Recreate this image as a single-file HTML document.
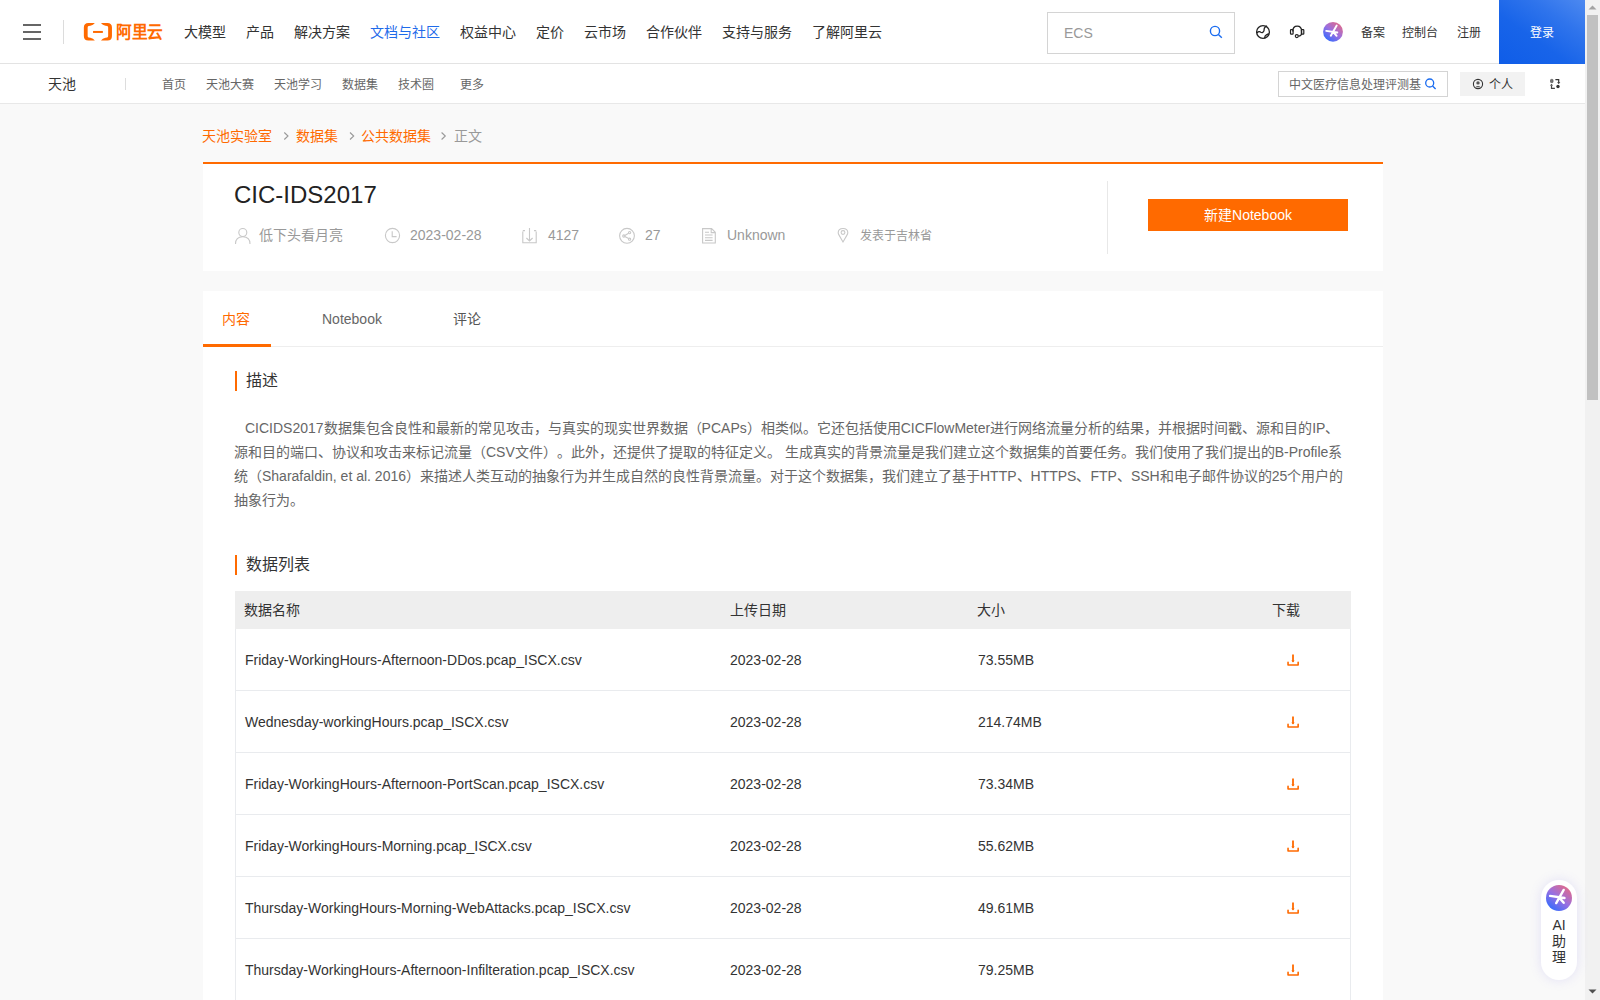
<!DOCTYPE html>
<html lang="zh-CN"><head><meta charset="utf-8">
<style>
*{margin:0;padding:0;box-sizing:border-box}
html,body{text-spacing-trim:space-all;width:1600px;height:1000px;overflow:hidden;background:#f9f9f9;font-family:"Liberation Sans",sans-serif;color:#333}
.a{position:absolute}
.t{position:absolute;white-space:nowrap;line-height:20px}
.f12{font-size:12px}.f14{font-size:14px}.f16{font-size:16px}
#hdr{left:0;top:0;width:1585px;height:64px;background:#fff;border-bottom:1px solid #e3e3e3}
#sub{left:0;top:64px;width:1585px;height:40px;background:#fff;border-bottom:1px solid #e8e8e8}
.bar{position:absolute;left:23px;width:18px;height:2px;background:#666}
</style></head><body>
<!-- header -->
<div id="hdr" class="a"></div>
<div class="bar" style="top:24px"></div>
<div class="bar" style="top:31px"></div>
<div class="bar" style="top:38px"></div>
<div class="a" style="left:63px;top:20px;width:1px;height:24px;background:#dcdcdc"></div>
<svg class="a" style="left:83px;top:22px" width="82" height="20" viewBox="0 0 82 20">
<g transform="translate(0.85,0.95)" fill="#ff6a00">
<path d="M11 0 L4.5 0 Q0 0 0 4.5 L0 13.1 Q0 17.6 4.5 17.6 L11 17.6 Q9.5 15.6 6.5 14.9 L4.8 14.5 Q3.8 14.2 3.8 13 L3.8 4.6 Q3.8 3.4 4.8 3.1 L6.5 2.7 Q9.5 2 11 0Z"/>
<path transform="translate(28.1,0) scale(-1,1)" d="M11 0 L4.5 0 Q0 0 0 4.5 L0 13.1 Q0 17.6 4.5 17.6 L11 17.6 Q9.5 15.6 6.5 14.9 L4.8 14.5 Q3.8 14.2 3.8 13 L3.8 4.6 Q3.8 3.4 4.8 3.1 L6.5 2.7 Q9.5 2 11 0Z"/>
<rect x="9.2" y="8" width="9.8" height="2"/>
</g>
</svg>
<div class="t" style="left:115.5px;top:20.5px;font-size:16px;line-height:20px;color:#ff6a00;font-weight:bold;letter-spacing:0px;transform:scale(0.98,1.1);transform-origin:0 0">阿里云</div>
<div class="t f14" style="left:184px;top:22px">大模型</div>
<div class="t f14" style="left:246px;top:22px">产品</div>
<div class="t f14" style="left:294px;top:22px">解决方案</div>
<div class="t f14" style="left:370px;top:22px;color:#1f6bea">文档与社区</div>
<div class="t f14" style="left:460px;top:22px">权益中心</div>
<div class="t f14" style="left:536px;top:22px">定价</div>
<div class="t f14" style="left:584px;top:22px">云市场</div>
<div class="t f14" style="left:646px;top:22px">合作伙伴</div>
<div class="t f14" style="left:722px;top:22px">支持与服务</div>
<div class="t f14" style="left:811.5px;top:22px">了解阿里云</div>
<div class="a" style="left:1047px;top:12px;width:188px;height:42px;border:1px solid #d4d4d4;background:#fff"></div>
<div class="t f14" style="left:1064px;top:23px;color:#999">ECS</div>
<svg class="a" style="left:1209px;top:25px" width="15" height="15" viewBox="0 0 15 15"><circle cx="6" cy="6" r="4.6" fill="none" stroke="#1a6cf0" stroke-width="1.4"/><path d="M9.4 9.4 L12.8 12.8" stroke="#1a6cf0" stroke-width="1.4"/></svg>
<div class="t f12" style="left:1361px;top:23px">备案</div>
<div class="t f12" style="left:1402px;top:23px">控制台</div>
<div class="t f12" style="left:1457px;top:23px">注册</div>
<div class="a" style="left:1499px;top:0;width:86px;height:64px;background:linear-gradient(35deg,#0f5de8 0%,#1864e9 40%,#2f74ec 70%,#4d89f0 100%)"></div>
<div class="t f12" style="left:1530px;top:23px;color:#fff">登录</div>
<!-- subnav -->
<div id="sub" class="a"></div>
<div class="t f14" style="left:48px;top:74px">天池</div>
<div class="a" style="left:125px;top:78px;width:1px;height:12px;background:#ddd"></div>
<div class="t f12" style="left:162px;top:75px;color:#666">首页</div>
<div class="t f12" style="left:206px;top:75px;color:#666">天池大赛</div>
<div class="t f12" style="left:274px;top:75px;color:#666">天池学习</div>
<div class="t f12" style="left:342px;top:75px;color:#666">数据集</div>
<div class="t f12" style="left:398px;top:75px;color:#666">技术圈</div>
<div class="t f12" style="left:460px;top:75px;color:#666">更多</div>
<div class="a" style="left:1278px;top:71px;width:170px;height:26px;border:1px solid #d4d4d4;background:#fff"></div>
<div class="t f12" style="left:1289px;top:75px;color:#666">中文医疗信息处理评测基</div>
<div class="a" style="left:1460px;top:72px;width:65px;height:24px;background:#f2f2f2"></div>
<div class="t f12" style="left:1489px;top:75px">个人</div>
<!-- breadcrumb -->
<div class="t f14" style="left:202px;top:126px;color:#ff6a00">天池实验室</div>
<div class="t f14" style="left:295.5px;top:126px;color:#ff6a00">数据集</div>
<div class="t f14" style="left:360.5px;top:126px;color:#ff6a00">公共数据集</div>
<div class="t f14" style="left:454px;top:126px;color:#999">正文</div>
<!-- card1 -->
<div class="a" style="left:203px;top:162px;width:1180px;height:109px;background:#fff;border-top:2px solid #ff6a00"></div>
<div class="t" style="left:234px;top:180px;font-size:24px;line-height:30px;color:#222">CIC-IDS2017</div>
<div class="t f14" style="left:259px;top:225px;color:#999">低下头看月亮</div>
<div class="t f14" style="left:410px;top:225px;color:#999">2023-02-28</div>
<div class="t f14" style="left:548px;top:225px;color:#999">4127</div>
<div class="t f14" style="left:645px;top:225px;color:#999">27</div>
<div class="t f14" style="left:727px;top:225px;color:#999">Unknown</div>
<div class="t f12" style="left:860px;top:226px;color:#999">发表于吉林省</div>
<div class="a" style="left:1107px;top:181px;width:1px;height:73px;background:#e8e8e8"></div>
<div class="a" style="left:1148px;top:199px;width:200px;height:32px;background:#ff6a00"></div>
<div class="t f14" style="left:1148px;top:205px;width:200px;text-align:center;color:#fff">新建Notebook</div>
<!-- card2 -->
<div class="a" style="left:203px;top:291px;width:1180px;height:709px;background:#fff"></div>
<div class="a" style="left:203px;top:346px;width:1180px;height:1px;background:#eee"></div>
<div class="a" style="left:203px;top:344px;width:68px;height:3px;background:#ff6a00"></div>
<div class="t f14" style="left:222px;top:309px;color:#ff6a00">内容</div>
<div class="t f14" style="left:322px;top:309px;color:#666">Notebook</div>
<div class="t f14" style="left:453px;top:309px;color:#555">评论</div>
<div class="a" style="left:235px;top:371px;width:2px;height:20px;background:#ff6a00"></div>
<div class="t f16" style="left:246px;top:371px">描述</div>
<div class="a" style="left:235px;top:555px;width:2px;height:20px;background:#ff6a00"></div>
<div class="t f16" style="left:246px;top:555px">数据列表</div>
<!-- paragraph -->
<div class="t f14" style="left:245px;top:418px;color:#666">CICIDS2017数据集包含良性和最新的常见攻击，与真实的现实世界数据（PCAPs）相类似。它还包括使用CICFlowMeter进行网络流量分析的结果，并根据时间戳、源和目的IP、</div>
<div class="t f14" style="left:234px;top:442px;color:#666">源和目的端口、协议和攻击来标记流量（CSV文件）。此外，还提供了提取的特征定义。 生成真实的背景流量是我们建立这个数据集的首要任务。我们使用了我们提出的B-Profile系</div>
<div class="t f14" style="left:234px;top:466px;color:#666">统（Sharafaldin, et al. 2016）来描述人类互动的抽象行为并生成自然的良性背景流量。对于这个数据集，我们建立了基于HTTP、HTTPS、FTP、SSH和电子邮件协议的25个用户的</div>
<div class="t f14" style="left:234px;top:490px;color:#666">抽象行为。</div>
<!-- table -->
<div class="a" style="left:235px;top:591px;width:1116px;height:38px;background:#eee"></div>
<div class="t f14" style="left:244px;top:600px">数据名称</div>
<div class="t f14" style="left:730px;top:600px">上传日期</div>
<div class="t f14" style="left:977px;top:600px">大小</div>
<div class="t f14" style="left:1272px;top:600px">下载</div>
<div class="a" style="left:235px;top:629px;width:1px;height:371px;background:#e9ebee"></div>
<div class="a" style="left:1350px;top:629px;width:1px;height:371px;background:#e9ebee"></div>

<div class="t f14" style="left:245px;top:650px">Friday-WorkingHours-Afternoon-DDos.pcap_ISCX.csv</div>
<div class="t f14" style="left:730px;top:650px">2023-02-28</div>
<div class="t f14" style="left:978px;top:650px">73.55MB</div>
<svg class="a" style="left:1286px;top:652px" width="15" height="15" viewBox="0 0 15 15"><path d="M7 2.5 V9.5" stroke="#ff6a00" stroke-width="1.8" fill="none"/><path d="M5.3 8.6 L7 10.6 L8.7 8.6Z" fill="#ff6a00"/><path d="M2.05 10.2 V13 H12.15 V10.2" stroke="#ff6a00" stroke-width="1.6" fill="none" stroke-linejoin="round" stroke-linecap="round"/></svg>
<div class="a" style="left:235px;top:690px;width:1116px;height:1px;background:#e9ebee"></div>
<div class="t f14" style="left:245px;top:712px">Wednesday-workingHours.pcap_ISCX.csv</div>
<div class="t f14" style="left:730px;top:712px">2023-02-28</div>
<div class="t f14" style="left:978px;top:712px">214.74MB</div>
<svg class="a" style="left:1286px;top:714px" width="15" height="15" viewBox="0 0 15 15"><path d="M7 2.5 V9.5" stroke="#ff6a00" stroke-width="1.8" fill="none"/><path d="M5.3 8.6 L7 10.6 L8.7 8.6Z" fill="#ff6a00"/><path d="M2.05 10.2 V13 H12.15 V10.2" stroke="#ff6a00" stroke-width="1.6" fill="none" stroke-linejoin="round" stroke-linecap="round"/></svg>
<div class="a" style="left:235px;top:752px;width:1116px;height:1px;background:#e9ebee"></div>
<div class="t f14" style="left:245px;top:774px">Friday-WorkingHours-Afternoon-PortScan.pcap_ISCX.csv</div>
<div class="t f14" style="left:730px;top:774px">2023-02-28</div>
<div class="t f14" style="left:978px;top:774px">73.34MB</div>
<svg class="a" style="left:1286px;top:776px" width="15" height="15" viewBox="0 0 15 15"><path d="M7 2.5 V9.5" stroke="#ff6a00" stroke-width="1.8" fill="none"/><path d="M5.3 8.6 L7 10.6 L8.7 8.6Z" fill="#ff6a00"/><path d="M2.05 10.2 V13 H12.15 V10.2" stroke="#ff6a00" stroke-width="1.6" fill="none" stroke-linejoin="round" stroke-linecap="round"/></svg>
<div class="a" style="left:235px;top:814px;width:1116px;height:1px;background:#e9ebee"></div>
<div class="t f14" style="left:245px;top:836px">Friday-WorkingHours-Morning.pcap_ISCX.csv</div>
<div class="t f14" style="left:730px;top:836px">2023-02-28</div>
<div class="t f14" style="left:978px;top:836px">55.62MB</div>
<svg class="a" style="left:1286px;top:838px" width="15" height="15" viewBox="0 0 15 15"><path d="M7 2.5 V9.5" stroke="#ff6a00" stroke-width="1.8" fill="none"/><path d="M5.3 8.6 L7 10.6 L8.7 8.6Z" fill="#ff6a00"/><path d="M2.05 10.2 V13 H12.15 V10.2" stroke="#ff6a00" stroke-width="1.6" fill="none" stroke-linejoin="round" stroke-linecap="round"/></svg>
<div class="a" style="left:235px;top:876px;width:1116px;height:1px;background:#e9ebee"></div>
<div class="t f14" style="left:245px;top:898px">Thursday-WorkingHours-Morning-WebAttacks.pcap_ISCX.csv</div>
<div class="t f14" style="left:730px;top:898px">2023-02-28</div>
<div class="t f14" style="left:978px;top:898px">49.61MB</div>
<svg class="a" style="left:1286px;top:900px" width="15" height="15" viewBox="0 0 15 15"><path d="M7 2.5 V9.5" stroke="#ff6a00" stroke-width="1.8" fill="none"/><path d="M5.3 8.6 L7 10.6 L8.7 8.6Z" fill="#ff6a00"/><path d="M2.05 10.2 V13 H12.15 V10.2" stroke="#ff6a00" stroke-width="1.6" fill="none" stroke-linejoin="round" stroke-linecap="round"/></svg>
<div class="a" style="left:235px;top:938px;width:1116px;height:1px;background:#e9ebee"></div>
<div class="t f14" style="left:245px;top:960px">Thursday-WorkingHours-Afternoon-Infilteration.pcap_ISCX.csv</div>
<div class="t f14" style="left:730px;top:960px">2023-02-28</div>
<div class="t f14" style="left:978px;top:960px">79.25MB</div>
<svg class="a" style="left:1286px;top:962px" width="15" height="15" viewBox="0 0 15 15"><path d="M7 2.5 V9.5" stroke="#ff6a00" stroke-width="1.8" fill="none"/><path d="M5.3 8.6 L7 10.6 L8.7 8.6Z" fill="#ff6a00"/><path d="M2.05 10.2 V13 H12.15 V10.2" stroke="#ff6a00" stroke-width="1.6" fill="none" stroke-linejoin="round" stroke-linecap="round"/></svg>
<div class="a" style="left:235px;top:1000px;width:1116px;height:1px;background:#e9ebee"></div>
<!-- header icons -->
<svg class="a" style="left:1250px;top:18px" width="100" height="28" viewBox="1250 18 100 28">
<circle cx="1263" cy="32" r="6.4" fill="none" stroke="#222" stroke-width="1.3"/>
<path d="M1256.8 33.2 C1258 31.6 1259.6 31.2 1260.8 32.2 C1262 33 1263.6 32.4 1264 30.6 C1264.3 29.2 1263.8 28.2 1265 27.2 C1265.6 26.6 1266.4 26.2 1267 25.8" fill="none" stroke="#222" stroke-width="1.3"/>
<path d="M1264.6 38.4 C1264.6 36.6 1265.2 35.4 1266.4 34.8 C1267.2 34.4 1268 34 1268.8 33.6" fill="none" stroke="#222" stroke-width="1.3"/>
<path d="M1292.8 31.5 Q1292.8 26.2 1297.2 26.2 Q1301.6 26.2 1301.6 31.5 L1301.6 33.5 Q1301.4 36 1298.5 36.2" fill="none" stroke="#222" stroke-width="1.3"/>
<rect x="1290.5" y="29.6" width="2.6" height="4.6" rx="0.6" fill="none" stroke="#222" stroke-width="1.2"/>
<rect x="1301.4" y="29.6" width="2.4" height="4.6" rx="0.6" fill="none" stroke="#222" stroke-width="1.2"/>
<circle cx="1296.8" cy="36.1" r="1.5" fill="none" stroke="#222" stroke-width="1.2"/>
<defs><linearGradient id="aig" x1="0.15" y1="0.95" x2="0.85" y2="0.05"><stop offset="0" stop-color="#2f6bff"/><stop offset="0.5" stop-color="#9a6fe0"/><stop offset="1" stop-color="#e46a86"/></linearGradient></defs>
<circle cx="1333" cy="31.8" r="9.9" fill="url(#aig)"/>
<path d="M1336.7 25.6 L1330.8 35.8 M1326.2 30.9 L1337.3 32.5 M1333.2 32 L1336.6 35.8" stroke="#fff" stroke-width="1.9" stroke-linecap="round" fill="none"/>
</svg>
<!-- subnav icons -->
<svg class="a" style="left:1424px;top:77px" width="14" height="14" viewBox="0 0 14 14"><circle cx="5.7" cy="6" r="4" fill="none" stroke="#1a6cf0" stroke-width="1.3"/><path d="M8.6 9 L11.6 12" stroke="#1a6cf0" stroke-width="1.3"/></svg>
<svg class="a" style="left:1472px;top:78px" width="12" height="12" viewBox="0 0 12 12"><circle cx="6" cy="6" r="4.6" fill="none" stroke="#333" stroke-width="1.1"/><circle cx="6" cy="4.9" r="1.7" fill="#555"/><path d="M3.2 9.3 Q6 6.5 8.8 9.3" fill="#555"/></svg>
<svg class="a" style="left:1545px;top:75px" width="20" height="18" viewBox="0 0 20 18"><rect x="5.6" y="4.4" width="2.4" height="3.2" rx="0.7" fill="#777" stroke="#555" stroke-width="0.8"/><path d="M10.4 4.6 H13.7 V7.6" fill="none" stroke="#333" stroke-width="1.2"/><path d="M12.1 7.3 L13.7 8.9 L15.3 7.3Z" fill="#222"/><path d="M6.5 10.6 V13.3 H9.9" fill="none" stroke="#444" stroke-width="1.2"/><path d="M4.9 10.6 L6.5 9 L8.1 10.6Z" fill="#222"/><circle cx="13" cy="11.5" r="1.7" fill="#333"/></svg>
<!-- breadcrumb arrows -->
<svg class="a" style="left:280px;top:130px" width="200" height="12" viewBox="280 130 200 12"><path d="M284.3 132.5 L288 136 L284.3 139.5 M350 132.5 L353.7 136 L350 139.5 M441.6 132.5 L445.3 136 L441.6 139.5" fill="none" stroke="#999" stroke-width="1.1"/></svg>
<!-- meta icons -->
<svg class="a" style="left:230px;top:222px" width="640" height="26" viewBox="230 222 640 26" fill="none" stroke="#c8c8c8" stroke-width="1.1">
<circle cx="242.8" cy="232.5" r="4"/>
<path d="M235.5 244 Q235.5 236.8 242.8 236.8 Q250 236.8 250 244"/>
<circle cx="392.5" cy="235.5" r="7.1"/>
<path d="M392.2 231.2 V236.6 H396.6"/>
<path d="M522.8 231.5 V242.8 H536.2 V231.5 M522.8 230.6 H525 M534 230.6 H536.2"/>
<path d="M529.5 228 V241 M526.4 238 L529.5 241 L532.6 238"/>
<circle cx="627" cy="235.8" r="7.4"/>
<circle cx="623.8" cy="236" r="1.1"/><circle cx="629.6" cy="232.6" r="1.1"/><circle cx="629.6" cy="239.2" r="1.1"/>
<path d="M624.8 235.4 L628.6 233.2 M624.8 236.6 L628.6 238.6"/>
<path d="M702.6 228.6 H711.6 L715.3 232.3 V243 H702.6 Z M711.2 228.6 V232.6 H715.3"/>
<path d="M705 235 H712.6 M705 237.8 H712.6 M705 240.4 H712.6 M705 232.2 H709"/>
<path d="M843 242 L839.2 235.4 Q838.2 233.8 838.2 232.7 Q838.2 228.5 843 228.5 Q847.8 228.5 847.8 232.7 Q847.8 233.8 846.8 235.4 Z"/>
<circle cx="843" cy="232.5" r="1.9"/>
</svg>
<!-- scrollbar -->
<div class="a" style="left:1585px;top:0;width:15px;height:1000px;background:#f1f1f1"></div>
<div class="a" style="left:1587px;top:15px;width:11px;height:385px;background:#c1c1c1"></div>
<svg class="a" style="left:1585px;top:0" width="15" height="15" viewBox="0 0 15 15"><path d="M3.5 9.5 L7.5 5.5 L11.5 9.5Z" fill="#a3a3a3"/></svg>
<svg class="a" style="left:1585px;top:985px" width="15" height="15" viewBox="0 0 15 15"><path d="M3.5 4.5 L7.5 8.5 L11.5 4.5Z" fill="#505050"/></svg>
<!-- AI widget -->
<div class="a" style="left:1541px;top:880px;width:36px;height:100px;border-radius:18px;background:#fff;box-shadow:0 0 12px rgba(120,110,230,0.18)"></div>
<svg class="a" style="left:1546px;top:885px" width="26" height="26" viewBox="0 0 26 26"><defs><linearGradient id="aig2" x1="0.15" y1="0.95" x2="0.85" y2="0.05"><stop offset="0" stop-color="#2f6bff"/><stop offset="0.5" stop-color="#9a6fe0"/><stop offset="1" stop-color="#e46a86"/></linearGradient></defs><circle cx="13" cy="13" r="13" fill="url(#aig2)"/><path d="M17.7 4.9 L10.2 18.1 M4.1 10.9 L18.5 13 M13.3 12.6 L17.7 17.8" stroke="#fff" stroke-width="2.4" stroke-linecap="round" fill="none"/></svg>
<div class="t f14" style="left:1541px;top:917px;width:36px;text-align:center;line-height:16px">AI<br>助<br>理</div>
</body></html>
